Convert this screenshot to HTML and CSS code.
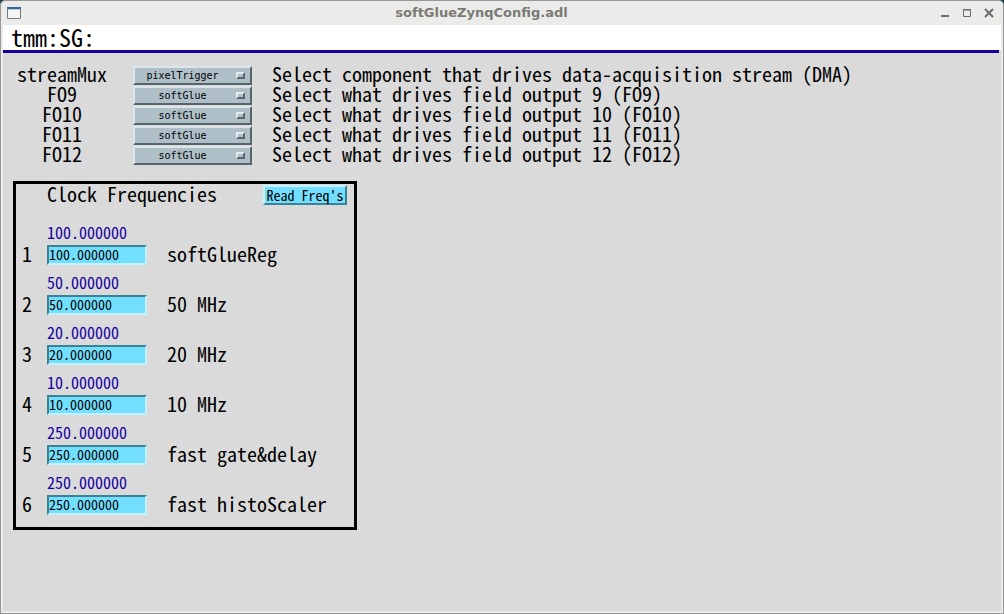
FILE: index.html
```html
<!DOCTYPE html>
<html lang="en">
<head>
<meta charset="utf-8">
<title>softGlueZynqConfig.adl</title>
<link rel="stylesheet" href="styles.css">
</head>
<body>
<div class="window">
  <header class="titlebar">
    <svg class="app-icon" width="14" height="12" viewBox="0 0 14 12" aria-hidden="true"><path d="M.5.5h13v11H.5z" fill="#f4f4f2" stroke="#777d84"/><path d="M0 0h14v2H0z" fill="#38659e"/><path d="M1 2h12v1H1z" fill="#b9cbe0"/></svg>
    <h1 class="title">softGlueZynqConfig.adl</h1>
    <div class="window-buttons">
      <button class="window-button" type="button" aria-label="Minimize"><svg width="10" height="10" viewBox="0 0 10 10"><path d="M1 7h8v2H1z" fill="#6c6b67"/></svg></button>
      <button class="window-button" type="button" aria-label="Maximize"><svg width="10" height="10" viewBox="0 0 10 10"><path d="M1.500 1.500h7v7h-7z" fill="none" stroke="#6c6b67"/><path d="M1 1h8v1.500H1z" fill="#6c6b67"/></svg></button>
      <button class="window-button" type="button" aria-label="Close"><svg width="10" height="10" viewBox="0 0 10 10"><path d="M1 1l8 8M9 1l-8 8" fill="none" stroke="#6c6b67" stroke-width="2"/></svg></button>
    </div>
  </header>
  <main class="content">
    <h2 class="prefix">tmm:SG:</h2>
    <section class="outputs">
      <div class="output"><label class="output-name" for="mux">streamMux</label><span class="menu"><select class="menu-select" id="mux"><option>pixelTrigger</option></select></span><span class="hint">Select component that drives data-acquisition stream (DMA)</span></div>
      <div class="output"><label class="output-name" for="fo9">FO9</label><span class="menu"><select class="menu-select" id="fo9"><option>softGlue</option></select></span><span class="hint">Select what drives field output 9 (FO9)</span></div>
      <div class="output"><label class="output-name" for="fo10">FO10</label><span class="menu"><select class="menu-select" id="fo10"><option>softGlue</option></select></span><span class="hint">Select what drives field output 10 (FO10)</span></div>
      <div class="output"><label class="output-name" for="fo11">FO11</label><span class="menu"><select class="menu-select" id="fo11"><option>softGlue</option></select></span><span class="hint">Select what drives field output 11 (FO11)</span></div>
      <div class="output"><label class="output-name" for="fo12">FO12</label><span class="menu"><select class="menu-select" id="fo12"><option>softGlue</option></select></span><span class="hint">Select what drives field output 12 (FO12)</span></div>
    </section>
    <section class="clocks">
      <div class="clocks-head"><h3 class="clocks-title">Clock Frequencies</h3><button class="read" type="button">Read Freq's</button></div>
      <div class="clock"><output class="readback" for="c1">100.000000</output><span class="number">1</span><input class="field" id="c1" type="text" value="100.000000"><label class="clock-name" for="c1">softGlueReg</label></div>
      <div class="clock"><output class="readback" for="c2">50.000000</output><span class="number">2</span><input class="field" id="c2" type="text" value="50.000000"><label class="clock-name" for="c2">50 MHz</label></div>
      <div class="clock"><output class="readback" for="c3">20.000000</output><span class="number">3</span><input class="field" id="c3" type="text" value="20.000000"><label class="clock-name" for="c3">20 MHz</label></div>
      <div class="clock"><output class="readback" for="c4">10.000000</output><span class="number">4</span><input class="field" id="c4" type="text" value="10.000000"><label class="clock-name" for="c4">10 MHz</label></div>
      <div class="clock"><output class="readback" for="c5">250.000000</output><span class="number">5</span><input class="field" id="c5" type="text" value="250.000000"><label class="clock-name" for="c5">fast gate&amp;delay</label></div>
      <div class="clock"><output class="readback" for="c6">250.000000</output><span class="number">6</span><input class="field" id="c6" type="text" value="250.000000"><label class="clock-name" for="c6">fast histoScaler</label></div>
    </section>
  </main>
</div>
</body>
</html>
```

FILE: styles.css
```css
*,
*::after { box-sizing: border-box; }

body {
  margin: 0;
  background: #1d4254;
  color: #000;
  font-family: "Noto Sans Mono CJK JP", "DejaVu Sans Mono", monospace;
  font-size: 20px;
  line-height: 18px;
}

.window {
  display: flex;
  flex-direction: column;
  min-height: 100vh;
  border: 1px solid #989898;
  border-radius: 5px 5px 0 0;
  background: #ebebe9;
}

.titlebar {
  display: grid;
  grid-template-columns: 54px 1fr 54px;
  align-items: center;
  height: 24px;
  padding: 0 9px 0 6px;
}

.title {
  margin: 0;
  padding-right: 38px;
  color: #7b7b75;
  font: bold 13px/20px "DejaVu Sans", sans-serif;
  text-align: center;
}

.window-buttons {
  display: flex;
  justify-content: space-between;
}

.window-button {
  display: flex;
  padding: 0;
  border: 0;
  background: none;
}

.content {
  flex: 1;
  margin: 0 2px 2px;
  background: #dadada;
}

/* White band with a blue rule that stops short of the right edge */
.prefix {
  margin: 0;
  padding: 0 0 2px 8px;
  background: #fff;
  font-size: 24px;
  font-weight: 400;
  line-height: 23px;
}

.outputs {
  margin-right: 2px;
  padding: 12px 0 16px 14px;
  border-top: 3px solid #1400a0;
}

.output {
  display: grid;
  grid-template-columns: 90px auto 1fr;
  column-gap: 20px;
  height: 20px;
}

.output-name { text-align: center; }

.menu {
  display: grid;
  grid-template-columns: 1fr 16px;
  align-items: center;
  width: 125px;
  padding-left: 6px;
}

.menu-select {
  grid-area: 1 / 1 / 2 / 3;
  width: 100%;
  height: 19px;
  padding: 0 20px 0 0;
  border: 2px solid;
  border-color: #dce6ea #56656b #56656b #dce6ea;
  border-radius: 0;
  appearance: none;
  background: #aebfc7;
  color: #000;
  font-family: "DejaVu Sans Mono", monospace;
  font-size: 10px;
  line-height: 15px;
  text-align-last: center;
}

.menu::after {
  content: "";
  grid-area: 1 / 2;
  width: 9px;
  height: 7px;
  border: 2px solid;
  border-color: #e4ecef #56656b #56656b #e4ecef;
  background: #aebfc7;
  pointer-events: none;
}

.hint { white-space: nowrap; }

.clocks {
  width: 344px;
  margin-left: 10px;
  padding: 1px 7px 12px 6px;
  border: 3px solid #000;
}

.clocks-head {
  display: flex;
  justify-content: space-between;
  padding-left: 25px;
}

.clocks-title {
  margin: 0;
  font-size: 20px;
  font-weight: 400;
}

.read {
  width: 84px;
  height: 20px;
  padding: 0;
  border: 2px solid;
  border-color: #c4f1ff #3b8296 #3b8296 #c4f1ff;
  background: #73dfff;
  color: #000;
  font-family: inherit;
  font-size: 14px;
  line-height: 16px;
}

.clock {
  display: grid;
  grid-template-columns: 25px 100px 1fr;
  grid-template-rows: 18px 20px;
  row-gap: 4px;
  padding-top: 8px;
}

.clocks-head + .clock { margin-top: 10px; }

.readback {
  grid-column: 2 / 4;
  color: #1400a0;
  font-size: 16px;
}

.number { grid-column: 1; }

.field {
  width: 100%;
  height: 20px;
  padding: 0 0 2px;
  border: 2px solid;
  border-color: #3b8296 #c4f1ff #c4f1ff #3b8296;
  background: #73dfff;
  color: #000;
  font-family: inherit;
  font-size: 14px;
}

.clock-name { padding-left: 20px; }
```
